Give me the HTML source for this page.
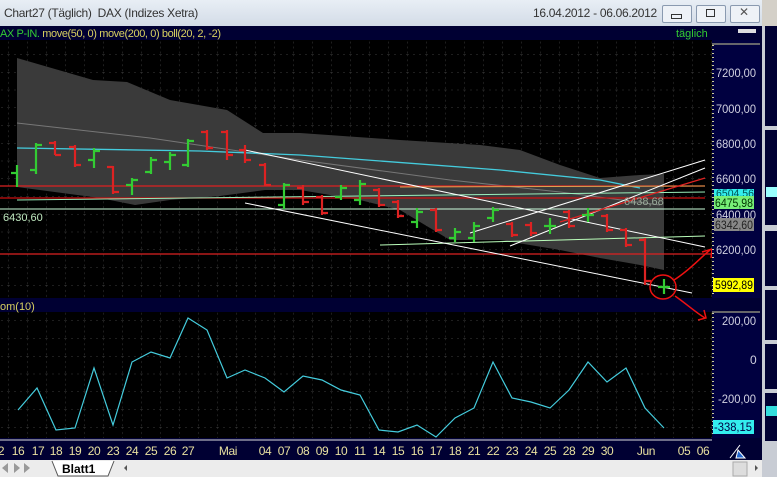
<!DOCTYPE html>
<html><head><meta charset="utf-8"><style>
body{margin:0;width:777px;height:477px;overflow:hidden;background:#d4d0c8;font-family:"Liberation Sans",sans-serif;position:relative}
.t{position:absolute;white-space:nowrap}
</style></head><body>
<div class="t" style="left:0;top:0;width:762px;height:26px;background:linear-gradient(#e8eef5,#d3dce7);"></div>
<div class="t" style="left:4px;top:6px;font-size:12px;color:#333;letter-spacing:-0.3px">Chart27 (Täglich)&nbsp; DAX (Indizes Xetra)</div>
<div class="t" style="left:533px;top:6px;font-size:12px;color:#333;letter-spacing:-0.3px">16.04.2012 - 06.06.2012</div>
<div class="t" style="left:662px;top:5px;width:28px;height:16px;border:1px solid #8a9ab0;background:#eef2f7;border-radius:2px"></div>
<div class="t" style="left:696px;top:5px;width:28px;height:16px;border:1px solid #8a9ab0;background:#eef2f7;border-radius:2px"></div>
<div class="t" style="left:730px;top:5px;width:28px;height:16px;border:1px solid #8a9ab0;background:#eef2f7;border-radius:2px"></div>
<div class="t" style="left:671px;top:14px;width:9px;height:3px;border:1px solid #333"></div>
<div class="t" style="left:706px;top:9px;width:7px;height:6px;border:1px solid #333"></div>
<div class="t" style="left:739px;top:5px;font-size:12px;color:#555">✕</div>
<svg class="t" style="left:0;top:26px" width="777" height="451">
<rect x="0" y="0" width="762" height="434" fill="#000033"/>
<rect x="762" y="0" width="15" height="451" fill="#c8ccd4"/>
<rect x="765" y="0" width="12" height="100" fill="#000033"/>
<rect x="765" y="104" width="12" height="95" fill="#000033"/>
<rect x="765" y="205" width="12" height="55" fill="#000033"/>
<rect x="765" y="264" width="12" height="50" fill="#000033"/>
<rect x="765" y="318" width="12" height="45" fill="#000033"/>
<rect x="765" y="367" width="12" height="48" fill="#000033"/>
<rect x="766" y="161" width="11" height="10" fill="#9ff"/>
<rect x="766" y="380" width="11" height="10" fill="#3dd"/>
</svg>
<div class="t" style="left:0;top:28px;font-size:11px;color:#d8d060;letter-spacing:-0.4px"><span style="color:#3c3">AX P-IN.</span> move(50, 0) move(200, 0) boll(20, 2, -2)</div>
<div class="t" style="left:676px;top:28px;font-size:11px;color:#3c3">täglich</div>
<div class="t" style="left:738px;top:29px;width:18px;height:4px;background:#ddd"></div>
<svg class="t" style="left:0;top:0" width="777" height="477">
<defs><pattern id="g" width="19" height="17.75" patternUnits="userSpaceOnUse" x="8" y="1"><line x1="0" y1="0" x2="0" y2="18" stroke="#555" stroke-dasharray="2,3"/><line x1="0" y1="0" x2="19" y2="0" stroke="#555" stroke-dasharray="2,4"/></pattern></defs>
<rect x="0" y="40" width="712" height="258" fill="#000"/>
<rect x="0" y="312" width="712" height="126" fill="#000"/>
<rect x="0" y="40" width="712" height="258" fill="url(#g)" opacity=".7"/>
<rect x="0" y="312" width="712" height="126" fill="url(#g)" opacity=".7"/>
<polygon points="17,58 93,80 127,82 170,100 227,110 263,133 300,133 400,140 480,145 520,150 560,165 600,178 640,175 664,174 664,270 640,265 600,258 560,250 500,240 450,240 400,210 360,200 300,190 265,190 220,196 170,200 135,205 100,198 17,187" fill="#3a3a3a"/>
<polyline points="17,123 150,138 300,160 450,180 560,192 660,205" fill="none" stroke="#777" stroke-width="1"/>
<polyline points="17,148 200,151 300,155 500,170 600,180 640,188" fill="none" stroke="#4cd" stroke-width="1.3"/>
<line x1="0" y1="186" x2="705" y2="186" stroke="#d22" stroke-width="1.3"/>
<line x1="0" y1="198" x2="705" y2="198" stroke="#c11" stroke-width="1.3"/>
<line x1="17" y1="200" x2="705" y2="192" stroke="#9eb" stroke-width="1"/>
<line x1="400" y1="187" x2="705" y2="186" stroke="#e0a050" stroke-width="1"/>
<line x1="0" y1="209" x2="705" y2="209" stroke="#cfd" stroke-width="1"/>
<line x1="380" y1="245" x2="705" y2="236" stroke="#bfb" stroke-width="1"/>
<line x1="0" y1="254" x2="712" y2="254" stroke="#d22" stroke-width="1.3"/>
<line x1="245" y1="203" x2="692" y2="293" stroke="#fff" stroke-width="1"/>
<line x1="245" y1="150" x2="705" y2="247" stroke="#fff" stroke-width="1"/>
<line x1="510" y1="246" x2="705" y2="168" stroke="#fff" stroke-width="1"/>
<line x1="470" y1="233" x2="705" y2="160" stroke="#fff" stroke-width="1"/>
<line x1="560" y1="222" x2="705" y2="178" stroke="#d22" stroke-width="1.3"/>
<g stroke-width="2.2" fill="none">
<path d="M17 165V187M11 173H17" stroke="#3c3"/>
<path d="M36 143V174M30 170H36M36 145H42" stroke="#3c3"/>
<path d="M55 141V155M49 143H55M55 155H61" stroke="#d22"/>
<path d="M75 145V167M69 147H75M75 165H81" stroke="#d22"/>
<path d="M94 148V168M88 160H94M94 151H100" stroke="#3c3"/>
<path d="M113 166V194M107 167H113M113 192H119" stroke="#d22"/>
<path d="M132 178V195M126 185H132M132 180H138" stroke="#3c3"/>
<path d="M151 157V174M145 172H151M151 160H157" stroke="#3c3"/>
<path d="M170 152V170M164 162H170M170 155H176" stroke="#3c3"/>
<path d="M188 139V167M182 165H188M188 141H194" stroke="#3c3"/>
<path d="M207 130V150M201 132H207M207 148H213" stroke="#d22"/>
<path d="M227 130V160M221 132H227M227 155H233" stroke="#d22"/>
<path d="M245 145V163M239 150H245M245 160H251" stroke="#d22"/>
<path d="M265 163V186M259 165H265M265 185H271" stroke="#d22"/>
<path d="M284 183V209M278 205H284M284 185H290" stroke="#3c3"/>
<path d="M303 185V205M297 188H303M303 202H309" stroke="#d22"/>
<path d="M322 195V215M316 197H322M322 213H328" stroke="#d22"/>
<path d="M341 185V200M335 197H341M341 188H347" stroke="#3c3"/>
<path d="M360 180V205M354 200H360M360 184H366" stroke="#3c3"/>
<path d="M379 188V207M373 190H379M379 205H385" stroke="#d22"/>
<path d="M398 200V218M392 202H398M398 216H404" stroke="#d22"/>
<path d="M417 208V228M411 222H417M417 212H423" stroke="#3c3"/>
<path d="M436 208V232M430 210H436M436 230H442" stroke="#d22"/>
<path d="M455 228V242M449 238H455M455 232H461" stroke="#3c3"/>
<path d="M474 222V242M468 238H474M474 226H480" stroke="#3c3"/>
<path d="M493 207V222M487 218H493M493 210H499" stroke="#3c3"/>
<path d="M512 222V237M506 224H512M512 235H518" stroke="#d22"/>
<path d="M531 222V236M525 225H531M531 233H537" stroke="#d22"/>
<path d="M550 218V234M544 226H550M550 226H556" stroke="#3c3"/>
<path d="M569 210V228M563 212H569M569 226H575" stroke="#d22"/>
<path d="M588 208V222M582 215H588M588 215H594" stroke="#3c3"/>
<path d="M607 214V232M601 216H607M607 230H613" stroke="#d22"/>
<path d="M626 228V247M620 230H626M626 245H632" stroke="#d22"/>
<path d="M645 238V285M639 240H645M645 281H651" stroke="#d22"/>
<path d="M664 279V294M658 287H670" stroke="#3c3"/>
</g>
<g stroke="#e11" stroke-width="1.5" fill="none">
<ellipse cx="663" cy="287" rx="13" ry="12"/>
<path d="M674 280C690 270 700 258 710 250M702 252L712 249L711 258"/>
<path d="M675 296C688 305 695 312 705 318M698 320L706 318L704 310"/>
</g>
<text x="3" y="221" font-size="11" fill="#bfe8bf">6430,60</text>
<text x="624" y="205" font-size="11" fill="#9a9">6438,68</text>
<polyline points="18,410 37,388 56,430 75,428 94,368 113,425 132,362 151,352 170,358 188,318 207,330 227,378 245,370 265,378 284,392 303,376 322,380 341,390 360,395 379,430 398,432 417,425 436,437 455,418 474,408 493,362 512,398 531,402 550,408 569,390 588,362 607,382 626,368 645,408 664,428" fill="none" stroke="#4cd" stroke-width="1.2"/>
<rect x="712" y="40" width="48" height="258" fill="#000040"/>
<rect x="712" y="312" width="48" height="126" fill="#000040"/>
<line x1="713" y1="45" x2="713" y2="296" stroke="#cc9" stroke-dasharray="1,3" stroke-width="2"/>
<line x1="713" y1="313" x2="713" y2="436" stroke="#cc9" stroke-dasharray="1,3" stroke-width="2"/>
<line x1="712" y1="44" x2="760" y2="44" stroke="#cc9"/>
<line x1="712" y1="312" x2="760" y2="312" stroke="#cc9"/>
<g font-size="12" fill="#d0d0e0">
<text x="716" y="77" textLength="40" lengthAdjust="spacingAndGlyphs">7200,00</text><text x="716" y="113" textLength="40" lengthAdjust="spacingAndGlyphs">7000,00</text><text x="716" y="148" textLength="40" lengthAdjust="spacingAndGlyphs">6800,00</text><text x="716" y="183" textLength="40" lengthAdjust="spacingAndGlyphs">6600,00</text>
<text x="716" y="219" textLength="40" lengthAdjust="spacingAndGlyphs">6400,00</text><text x="716" y="254" textLength="40" lengthAdjust="spacingAndGlyphs">6200,00</text>
<text x="722" y="325" textLength="34" lengthAdjust="spacingAndGlyphs">200,00</text><text x="750" y="364">0</text><text x="718" y="403" textLength="38" lengthAdjust="spacingAndGlyphs">-200,00</text>
</g>
<rect x="714" y="189" width="40" height="9" fill="#3ee"/><text x="716" y="197" font-size="11" fill="#055" textLength="38" lengthAdjust="spacingAndGlyphs">6504,56</text>
<rect x="714" y="196" width="40" height="13" fill="#7e7"/><text x="715" y="207" font-size="12" fill="#030" textLength="38" lengthAdjust="spacingAndGlyphs">6475,98</text>
<rect x="714" y="218" width="40" height="13" fill="#888"/><text x="715" y="229" font-size="12" fill="#222" textLength="38" lengthAdjust="spacingAndGlyphs">6342,60</text>
<rect x="713" y="278" width="41" height="14" fill="#ff0"/><text x="715" y="289" font-size="12" fill="#000" textLength="38" lengthAdjust="spacingAndGlyphs">5992,89</text>
<rect x="713" y="420" width="41" height="14" fill="#3ee"/><text x="714" y="431" font-size="12" fill="#004" textLength="38" lengthAdjust="spacingAndGlyphs">-338,15</text>
<text x="0" y="310" font-size="11" fill="#d8d060">om(10)</text>
<line x1="0" y1="440" x2="712" y2="440" stroke="#ddd"/>
<g font-size="12" fill="#e8e0a0" text-anchor="middle" letter-spacing="-0.4">
<text x="1" y="455">2</text><text x="18" y="455">16</text><text x="38" y="455">17</text><text x="56" y="455">18</text><text x="75" y="455">19</text><text x="94" y="455">20</text><text x="113" y="455">23</text><text x="132" y="455">24</text><text x="151" y="455">25</text><text x="170" y="455">26</text><text x="188" y="455">27</text><text x="228" y="455">Mai</text><text x="265" y="455">04</text><text x="284" y="455">07</text><text x="303" y="455">08</text><text x="322" y="455">09</text><text x="341" y="455">10</text><text x="360" y="455">11</text><text x="379" y="455">14</text><text x="398" y="455">15</text><text x="417" y="455">16</text><text x="436" y="455">17</text><text x="455" y="455">18</text><text x="474" y="455">21</text><text x="493" y="455">22</text><text x="512" y="455">23</text><text x="531" y="455">24</text><text x="550" y="455">25</text><text x="569" y="455">28</text><text x="588" y="455">29</text><text x="607" y="455">30</text><text x="646" y="455">Jun</text><text x="684" y="455">05</text><text x="703" y="455">06</text>
</g>
<path d="M730 458L740 445M738 450L745 458L736 458Z" stroke="#fff" fill="#26c"/>
<rect x="0" y="460" width="762" height="17" fill="#ececec"/>
<path d="M2 468L8 463V473Z M20 468L14 463V473Z M30 468L24 463V473Z" fill="#999"/>
<path d="M52 461L58 476H108L114 461" fill="#fff" stroke="#555"/>
<text x="62" y="473" font-size="12" font-weight="bold" fill="#000">Blatt1</text>
<path d="M124 468L127 465V471Z" fill="#555"/>
<rect x="733" y="462" width="14" height="14" fill="#ddd" stroke="#aaa"/>
<path d="M755 465L758 468L755 471Z" fill="#555"/>
</svg>
</body></html>
